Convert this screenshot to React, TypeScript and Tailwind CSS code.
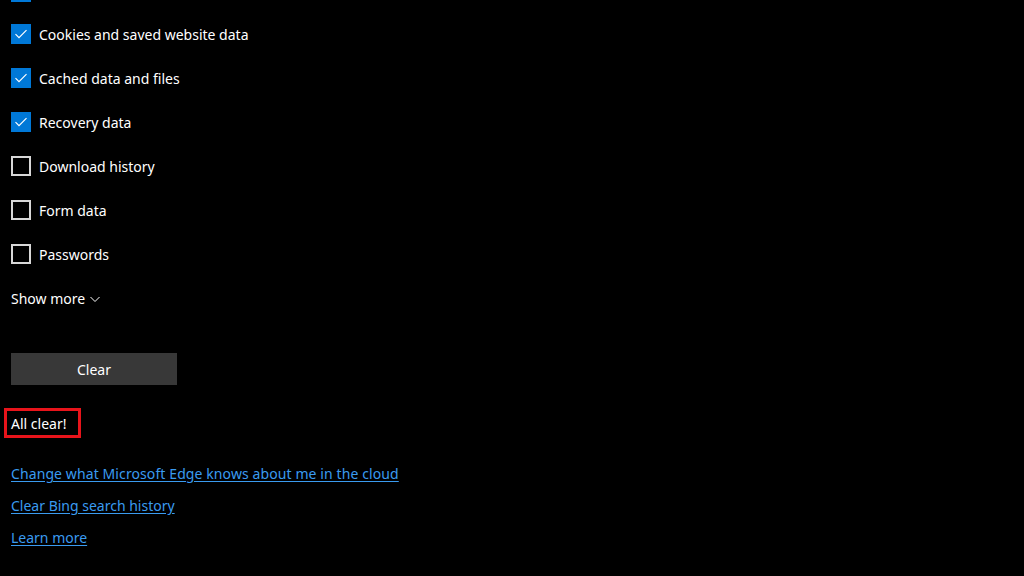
import React from "react";

const items = [
  { label: "Cookies and saved website data", checked: true },
  { label: "Cached data and files", checked: true },
  { label: "Recovery data", checked: true },
  { label: "Download history", checked: false },
  { label: "Form data", checked: false },
  { label: "Passwords", checked: false },
];

function Box({ checked }: { checked: boolean }) {
  if (checked) {
    return (
      <span className="flex h-5 w-5 shrink-0 items-center justify-center bg-[#0078d7]">
        <svg width="14" height="14" viewBox="0 0 14 14" fill="none">
          <path d="M1.5 7.2 L5 10.7 L12.5 3.2" stroke="white" strokeWidth="1.2" />
        </svg>
      </span>
    );
  }
  return <span className="h-5 w-5 shrink-0 border-2 border-[#d8d8d8]" />;
}

export default function App() {
  return (
    <div
      className="h-[576px] w-[1024px] overflow-hidden bg-black text-[14px] text-white"
      style={{ fontFamily: '"Noto Sans", "Open Sans", sans-serif' }}
    >
      <div className="flex flex-col pl-[11px]">
        {/* bottom edge of the row scrolled off above */}
        <span className="-mt-[18px] h-5 w-5 bg-[#0078d7]" />

        <div className="mt-[10px] flex flex-col">
          {items.map((it) => (
            <div key={it.label} className="flex h-[44px] items-center gap-2">
              <Box checked={it.checked} />
              <span>{it.label}</span>
            </div>
          ))}
        </div>

        <div className="mt-[10px] flex h-[24px] items-center gap-1">
          <span>Show more</span>
          <svg width="12" height="12" viewBox="0 0 12 12" fill="none" className="mt-[2px]">
            <path d="M1.5 4 L6 8.5 L10.5 4" stroke="white" strokeWidth="1" />
          </svg>
        </div>

        <button className="mt-[43px] h-[32px] w-[166px] bg-[#383838] text-white">Clear</button>

        <div className="-ml-[7px] mt-[23px] flex h-[30px] w-[77px] items-center border-[3px] border-[#e8141b] pl-[4px]">
          All clear!
        </div>

        <div className="mt-[25px] flex flex-col gap-[10px] text-[#3a9bf0]">
          <a className="h-[22px] self-start tracking-[0.1px] underline underline-offset-2">
            Change what Microsoft Edge knows about me in the cloud
          </a>
          <a className="h-[22px] self-start underline underline-offset-2">Clear Bing search history</a>
          <a className="h-[22px] self-start underline underline-offset-2">Learn more</a>
        </div>
      </div>
    </div>
  );
}
